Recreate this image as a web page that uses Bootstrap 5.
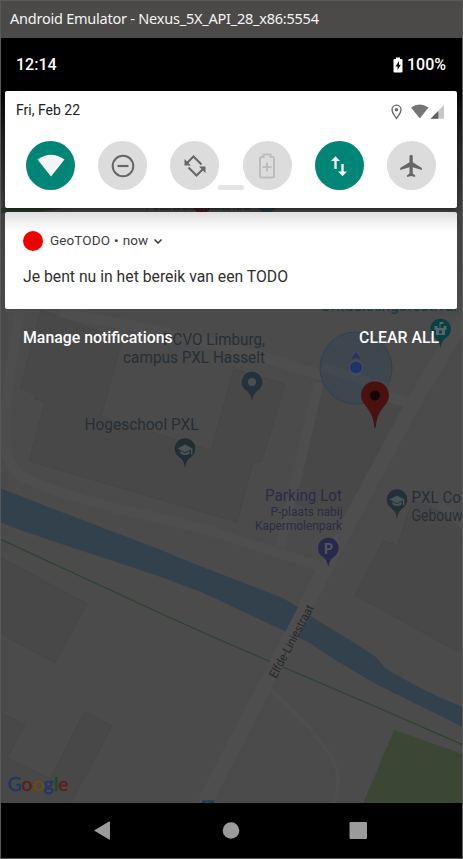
<!DOCTYPE html>
<html lang="nl">
<head>
<meta charset="utf-8">
<meta name="viewport" content="width=device-width, initial-scale=1">
<title>Android Emulator</title>
<link href="https://cdn.jsdelivr.net/npm/bootstrap@5.3.0/dist/css/bootstrap.min.css" rel="stylesheet">
<style>
body{font-family:Roboto,sans-serif;background:#000;line-height:1}
.emulator{width:463px;height:859px;background:#4b4b4b}
.frame-edge{border:1px solid #5a5959;pointer-events:none;z-index:3}
.title-strip{height:38px;background:#4c4a48;color:#f4f4f4;font:14.5px/37px "Noto Sans","Open Sans",sans-serif;padding:0 0 0 10px}
.title-strip span{letter-spacing:-.23px}
.status-strip{height:53px;background:#000;color:#fff;font-size:16px;font-weight:500;padding:1px 17px 0 16px}
.shade-card{margin-left:5px;width:452px;border-radius:2px;color:#212121}
.quick-panel{height:117px;background:#fff;box-shadow:0 2px 5px #0006}
.panel-head{padding:11px 12px 0 11px;height:39px;font-size:14px}
.date-text{padding-top:1px}
.tiles{padding:11px 21px 0}
.tile{width:49px;height:49px;border-radius:50%;background:#dcdcdc}
.tile-on{background:#008577}
.drag-handle{left:213px;top:94px;width:26px;height:5px;border-radius:2px;background:#e4e4e4}
.notice{height:97px;margin-top:4px;background:linear-gradient(#dedede,#f3f3f3 11px,#fff 20px);padding:19px 19px 0 18px}
.app-dot{width:20px;height:20px;border-radius:50%;background:#f00000;margin-right:7px}
.notice-head{font-size:13.5px;color:#3c3c3c;height:20px}
.notice-head .from{letter-spacing:.1px}
.notice-text{font-size:15.75px;margin-top:17px;line-height:18px;color:#303030}
.shade-foot{color:#fff;font-size:15.85px;font-weight:500;padding:21px 24px 0 23px}
.nav-strip{height:56px;background:#000}
.nav-strip svg{display:block}
.map-labels{font-family:Roboto,sans-serif;font-size:16px;fill:#272f36}
</style>
<script src="https://cdn.jsdelivr.net/npm/bootstrap@5.3.0/dist/js/bootstrap.bundle.min.js"></script>
</head>
<body>
<div class="emulator position-relative overflow-hidden d-flex flex-column">

  <!-- Dimmed map behind the notification shade -->
  <svg class="position-absolute top-0 start-0" width="463" height="859" viewBox="0 0 463 859">
    <defs>
      <path id="pin" d="M0 15C-1 8-3 6.500-6.500 3.500A10.300 10.300 0 1 1 6.500 3.500C3 6.500 1 8 0 15Z"/>
      <path id="cap" d="M-7.500-4.500 0-8.500 7.500-4.500 0-.7ZM-4.600-2.200V.5Q0 3.700 4.600.5V-2.200L0 .3ZM6-4.300H7.400V1.500H6Z" fill="#4c5358"/>
      <linearGradient id="topShade" x1="0" y1="0" x2="0" y2="1"><stop offset="0" stop-color="#000"/><stop offset=".35" stop-color="#000" stop-opacity=".6"/><stop offset="1" stop-color="#000" stop-opacity=".15"/></linearGradient>
      <linearGradient id="sideShade" x1="0" y1="0" x2="0" y2="1"><stop offset="0" stop-color="#000" stop-opacity=".15"/><stop offset="1" stop-color="#000" stop-opacity="0"/></linearGradient>
    </defs>
    <rect width="463" height="859" fill="#4b4b4b"/>
    <g fill="#484848" stroke="#444" stroke-width=".6">
      <path d="M41 310 20 389 36 394 34 399 45 402 29 461 237 522 253 463 262 461 285 384 234 369 211 450 101 417 122 340Z"/>
      <path d="M316 380 408 408 350 517 293 503Z"/>
      <path d="M462 520 412 500 398 545 383 541 355 595 458 652 463 647Z"/>
      <path d="M0 557 87 604 55 663 0 633Z"/>
      <path d="M0 712 25 725 7 758 50 779 85 711 112 726 70 804H0Z"/>
    </g>
    <g fill="none" stroke="#4e4e4e">
      <path d="M9 380C2 430 0 465 25 478C80 504 150 514 220 534L322 567" stroke-width="10"/>
      <path d="M20 310 9 380" stroke-width="10"/>
      <path d="M60 312C130 325 210 342 260 356L412 404" stroke-width="11"/>
      <path d="M319 382 280 547" stroke-width="10"/>
      <path d="M470 308 412 406 342 536 204 804" stroke-width="15"/>
      <path d="M272 691C290 707 310 727 318 739C337 762 343 775 334 804" stroke-width="3.500"/>
      <path d="M440 505 465 526" stroke-width="8"/>
    </g>
    <path d="M0 488C80 520 130 537 190 562C220 574 250 585 270 593C292 601 300 609 320 622C345 637 359 645 377 658L385 668C415 686 440 698 463 707V727L378 685C350 669 325 654 310 643L227 604C170 575 55 545 0 522Z" fill="#33414d"/>
    <path d="M0 539 175 620 227 643 388 712 463 745" fill="none" stroke="#2c4330" stroke-width="1.200"/>
    <path d="M311 596 268 680" stroke="#4e4e4e" stroke-width="13"/>
    <path d="M394 730 363 804H463V754Z" fill="#3b4634"/>
    <path d="M0 113V208H65L30 213H0Z" fill="#2d3d2c"/>
    <rect x="0" y="88" width="463" height="122" fill="url(#topShade)"/>
    <rect x="0" y="210" width="463" height="110" fill="url(#sideShade)"/>

    <circle cx="356" cy="368" r="36" fill="#3e464e" stroke="#2d4057" stroke-width="1"/>
    <path d="M322 367 388 388" stroke="#42494f" stroke-width="10"/>
    <circle cx="356" cy="367.500" r="7.500" fill="#484f5b"/>
    <circle cx="356" cy="367.500" r="6" fill="#1d3568"/>
    <path d="M351.500 359 356 352.500 360.500 359 356 357.500Z" fill="#1d3568"/>

    <circle cx="202" cy="203" r="10" fill="#4d0b08"/>
    <circle cx="267" cy="203" r="10" fill="#22333c"/>
    <g class="map-labels">
      <text x="145" y="210" textLength="106">PXL Designcentra</text>
      <text x="320" y="310.500" textLength="137" style="fill:#153e41">Ontdekkingsfestival</text>
      <text x="163" y="345" textLength="102" lengthAdjust="spacingAndGlyphs">PCVO Limburg,</text>
      <text x="123" y="363" textLength="142" lengthAdjust="spacingAndGlyphs">campus PXL Hasselt</text>
      <text x="84.500" y="430" textLength="114" lengthAdjust="spacingAndGlyphs">Hogeschool PXL</text>
      <text x="411.500" y="502.500" textLength="49.500" lengthAdjust="spacingAndGlyphs">PXL Co</text>
      <text x="411.500" y="521" textLength="51" lengthAdjust="spacingAndGlyphs">Gebouw</text>
      <g style="fill:#2b2b47">
        <text x="265" y="501" textLength="77" lengthAdjust="spacingAndGlyphs">Parking Lot</text>
        <g style="font-size:12.300px">
          <text x="270.500" y="516" textLength="72" lengthAdjust="spacingAndGlyphs">P-plaats nabij</text>
          <text x="255" y="530" textLength="87" lengthAdjust="spacingAndGlyphs">Kapermolenpark</text>
        </g>
      </g>
      <text transform="translate(276,679) rotate(-62)" textLength="81" lengthAdjust="spacingAndGlyphs" style="font-size:12px;fill:#282828">Elfde-Liniestraat</text>
    </g>

    <g transform="translate(252,386.500)"><use href="#pin" fill="#26323b"/><circle cy="-4.500" r="4" fill="#4b4f52"/></g>
    <g transform="translate(185,453)"><use href="#pin" fill="#222e36"/><use href="#cap"/></g>
    <g transform="translate(397,504)"><use href="#pin" fill="#223038"/><use href="#cap"/></g>
    <g transform="translate(328.300,552.500)"><use href="#pin" fill="#28284d"/><text x="-4.300" y="1.500" font-family="Roboto" font-size="14" font-weight="700" fill="#55555b">P</text></g>
    <g transform="translate(440.500,333.500)"><use href="#pin" fill="#0a3f44"/><path d="M-6-7.500H-3V-5.500H-1V-11.500H3V-9.500H0V-5.500H3V-7.500H6V-3.500H4.500V1.500H-4.500V-3.500H-6ZM-1.500-3V0H1.500V-3Z" fill="#52686a" fill-rule="evenodd"/></g>
    <path transform="translate(0,1.600)" d="M374.300 426C373.500 411 366 406 362.500 400A14 14 0 1 1 387.500 400C384 406 376.500 411 375.700 426Z" fill="#4b1111"/>
    <circle cx="375" cy="395.500" r="5" fill="#150505"/>
    <path d="M203 805V801.500H213V805" fill="none" stroke="#064457" stroke-width="2"/>
    <text x="7.500" y="791" textLength="61" lengthAdjust="spacingAndGlyphs" font-family="Lato,sans-serif" font-size="20" stroke-width=".4"><tspan fill="#203665" stroke="#203665">G</tspan><tspan fill="#601c1b" stroke="#601c1b">o</tspan><tspan fill="#684e0b" stroke="#684e0b">o</tspan><tspan fill="#203665" stroke="#203665">g</tspan><tspan fill="#174825" stroke="#174825">l</tspan><tspan fill="#601c1b" stroke="#601c1b">e</tspan></text>
  </svg>

  <header class="title-strip position-relative"><span>Android Emulator - Nexus_5X_API_28_x86:5554</span></header>

  <div class="status-strip position-relative d-flex align-items-center justify-content-between">
    <span>12:14</span>
    <span class="d-flex align-items-center">
      <svg class="me-1" width="10" height="16" viewBox="0 0 10 16"><path d="M3 .5H7V2H8.500Q9.500 2 9.500 3V14.500Q9.500 15.500 8.500 15.500H1.500Q.5 15.500 .5 14.500V3Q.5 2 1.500 2H3Z" fill="#fff"/><path d="M6 4 2.500 9.500H4.600V13L7.800 7.700H6Z" fill="#000"/></svg>
      100%
    </span>
  </div>

  <section class="shade-card quick-panel position-relative">
    <div class="panel-head d-flex justify-content-between">
      <span class="lh-1 date-text">Fri, Feb 22</span>
      <svg width="55" height="20" viewBox="0 0 55 20">
        <path d="M6.500 16.500C4.500 13 2 11 2 7.700A4.500 4.500 0 0 1 11 7.700C11 11 8.500 13 6.500 16.500Z" fill="none" stroke="#666" stroke-width="1.300"/><circle cx="6.500" cy="7.700" r="1.700" fill="#666"/>
        <path d="M21 5.500Q29.500-.5 38.500 5.500L29.800 16.500Z" fill="#757575"/>
        <path d="M54 3V16.800H40.500Z" fill="#c6c6c6"/><path d="M48.300 9V16.800H40.500Z" fill="#5f5f5f"/>
      </svg>
    </div>
    <div class="tiles d-flex justify-content-between">
      <div class="tile tile-on d-flex"><svg class="m-auto" width="30" height="30" viewBox="0 0 30 30"><path d="M1.500 8.500Q15-1 28.500 8.500L15 25.500Z" fill="#f5f5f5"/></svg></div>
      <div class="tile d-flex"><svg class="m-auto" width="26" height="26" viewBox="0 0 26 26"><circle cx="13" cy="13" r="10.300" fill="none" stroke="#666" stroke-width="2"/><path d="M7.500 13H18.500" stroke="#666" stroke-width="2.200"/></svg></div>
      <div class="tile d-flex"><svg class="m-auto" width="26" height="26" viewBox="0 0 26 26"><path d="M19.500 11.500 11.500 3.500 4.500 10.500M6.500 14.500 14.500 22.500 21.500 15.500" fill="none" stroke="#666" stroke-width="2"/><path d="M2.500 6V12.500H9ZM23.500 20V13.500H17Z" fill="#666"/></svg></div>
      <div class="tile d-flex"><svg class="m-auto" width="26" height="28" viewBox="0 0 26 28"><path d="M9.500 2.500H16.500V5H18.500Q20 5 20 6.500V24Q20 25.500 18.500 25.500H7.500Q6 25.500 6 24V6.500Q6 5 7.500 5H9.500ZM13 10.500V19.500M8.500 15H17.500" fill="none" stroke="#bdbdbd" stroke-width="2"/></svg></div>
      <div class="tile tile-on d-flex"><svg class="m-auto" width="26" height="26" viewBox="0 0 26 26"><path d="M9.500 16V6M16.500 11V20" stroke="#f5f5f5" stroke-width="2.400"/><path d="M5 8 9.500 3.300 14 8ZM12 18.500 16.500 23.200 21 18.500Z" fill="#f5f5f5"/></svg></div>
      <div class="tile d-flex"><svg class="m-auto" width="26" height="26" viewBox="0 0 24 24"><path d="M22 15.800V13.800L13.600 8.600V3Q13.600 1.500 12.100 1.500T10.600 3V8.600L2 13.800V15.800L10.600 13.200V19L8.400 20.600V22.200L12.100 21.200 15.800 22.200V20.600L13.600 19V13.200Z" fill="#666"/></svg></div>
    </div>
    <div class="drag-handle position-absolute"></div>
  </section>

  <article class="shade-card notice position-relative">
    <div class="notice-head d-flex align-items-center">
      <span class="app-dot"></span><span class="from">GeoTODO</span><span class="mx-1">•</span><span class="from">now</span>
      <svg class="ms-1" width="12" height="10" viewBox="0 0 12 10"><path d="M2.500 3.500 6 7 9.500 3.500" fill="none" stroke="#333" stroke-width="1.500"/></svg>
    </div>
    <div class="notice-text"><span>Je bent nu in het bereik van een TODO</span></div>
  </article>

  <div class="shade-foot position-relative d-flex justify-content-between"><span>Manage notifications</span><span>CLEAR ALL</span></div>

  <nav class="nav-strip position-relative mt-auto">
    <svg width="463" height="56" viewBox="0 0 463 56" fill="#9b9b9b"><path d="M94 27.500 109 18.500Q110 18.200 110 19.500V35.500Q110 37 109 36.500Z"/><circle cx="231" cy="27.500" r="8.300"/><rect x="349.500" y="19" width="17.500" height="17" rx="1.200"/></svg>
  </nav>
  <div class="frame-edge position-absolute top-0 start-0 w-100 h-100"></div>
</div>
</body>
</html>
